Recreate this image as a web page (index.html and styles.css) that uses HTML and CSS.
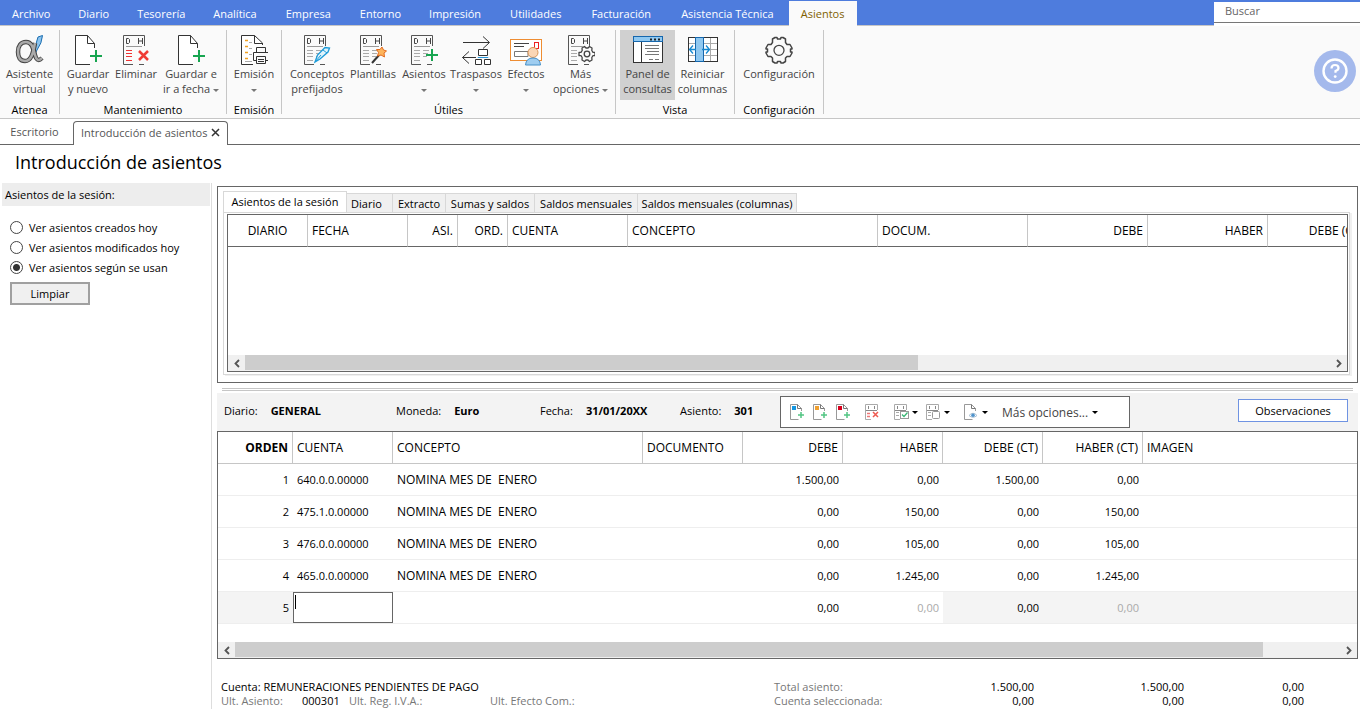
FILE: index.html
```html
<!DOCTYPE html>
<html lang="es">
<head>
<meta charset="utf-8">
<meta name="viewport" content="width=device-width, initial-scale=1">
<title>Introducción de asientos</title>
<link rel="stylesheet" href="styles.css">
</head>
<body>
<svg class="defs" aria-hidden="true">
  <symbol id="page-plus" viewBox="0 0 28 32">
    <path d="M20.500 14V9.500L13.500 1.500H1.500V30.500H16" fill="#fff" stroke="#333"/>
    <path d="M13.500 1.500V9.500H20.500" fill="none" stroke="#333"/>
    <path d="M22 16V28M16 22H28" stroke="#17a550" stroke-width="2"/>
  </symbol>
  <symbol id="ledger" viewBox="0 0 28 32">
    <path d="M22.500 12V1.500H1.500V30.500H11M17 30.500H22" fill="none" stroke="#555"/>
    <path d="M4.500 4.500V9.500H6.500L7.500 8.500V5.500L6.500 4.500ZM16.500 4V10M20.500 4V10M16.500 7H20.500" fill="none" stroke="#444"/>
    <path d="M4 12.500H20" stroke="#999"/>
  </symbol>
  <symbol id="ledger-lines" viewBox="0 0 28 32">
    <use href="#ledger"/>
    <path d="M4 16.500H10M4 19.500H10M4 22.500H10M4 26.500H10M13 16.500H19M13 19.500H18M13 22.500H17" stroke="#aaa"/>
  </symbol>
  <symbol id="gear" viewBox="0 0 28 28">
    <path d="M10 1.500H12L12.500 3H15.500L16 1.500H18L20.500 3V6.500L22 8.500H25L27 12V13H25.500V16H27V17L25 20.500H22L20.500 22V25.500L18 27H16L15.500 25.500H12.500L12 27H10L7.500 25.500V22L6 20.500H3L1 17V16H2.500V13H1V12L3 8.500H6L7.500 6.500V3Z" fill="none" stroke="#444" stroke-width="1.500" stroke-linejoin="round"/>
    <circle cx="14" cy="14.300" r="5" fill="none" stroke="#444" stroke-width="1.300"/>
  </symbol>
  <symbol id="small-page" viewBox="0 0 16 18">
    <path d="M12.500 8V5.500L8.500 1.500H1.500V16.500H9.500" fill="none" stroke="#999"/>
    <path d="M8.500 1.500V5.500H12.500" fill="none" stroke="#777"/>
  </symbol>
  <symbol id="small-plus" viewBox="0 0 16 18">
    <use href="#small-page"/>
    <path d="M12 9V15M9 12H15" stroke="#52c583" stroke-width="1.500"/>
  </symbol>
  <symbol id="small-ledger" viewBox="0 0 16 18">
    <path d="M13.500 7V1.500H1.500V16.500H7" fill="none" stroke="#aaa"/>
    <path d="M4.500 3V6M10.500 3V6M2 7.500H13" stroke="#888"/>
  </symbol>
  <symbol id="arrow-left" viewBox="0 0 8 9"><path d="M6 1L2.500 4.500L6 8" fill="none" stroke="#555" stroke-width="1.800"/></symbol>
  <symbol id="arrow-right" viewBox="0 0 8 9"><path d="M2 1L5.500 4.500L2 8" fill="none" stroke="#555" stroke-width="1.800"/></symbol>
</svg>

<header class="menubar">
  <nav class="menu" aria-label="Menú principal">
    <button class="menu-item">Archivo</button>
    <button class="menu-item">Diario</button>
    <button class="menu-item">Tesorería</button>
    <button class="menu-item">Analítica</button>
    <button class="menu-item menu-item-wide">Empresa</button>
    <button class="menu-item">Entorno</button>
    <button class="menu-item">Impresión</button>
    <button class="menu-item menu-item-wide">Utilidades</button>
    <button class="menu-item menu-item-wide">Facturación</button>
    <button class="menu-item menu-item-wide">Asistencia Técnica</button>
    <button class="menu-item menu-item-active">Asientos</button>
  </nav>
  <input class="search" type="search" placeholder="Buscar" aria-label="Buscar">
</header>

<section class="ribbon" aria-label="Cinta de opciones">
  <div class="group">
    <div class="tools tools-atenea">
      <button class="tool">
        <svg class="icon icon-wide" viewBox="0 0 30 32"><path d="M23 3L27.500 1.500Q27 9 22 16L20 20Q20 10 23 3Z" fill="#8cc4ee" stroke="#1c6eb0"/><path d="M20 9C18 20 16 27 10 27C5 27 3 23 3 18C3 12 6 8 11 8C17 8 18 14 20 21C21 25 23 28 27 24" fill="none" stroke="#444" stroke-width="4.500"/><path d="M20 9C18 20 16 27 10 27C5 27 3 23 3 18C3 12 6 8 11 8C17 8 18 14 20 21C21 25 23 28 27 24" fill="none" stroke="#aaa" stroke-width="2.500"/></svg>
        <span>Asistente<br>virtual</span>
      </button>
    </div>
    <h2 class="group-name">Atenea</h2>
  </div>
  <div class="group">
    <div class="tools tools-mantenimiento">
      <button class="tool"><svg class="icon" viewBox="0 0 28 32"><use href="#page-plus"/></svg><span>Guardar<br>y nuevo</span></button>
      <button class="tool"><svg class="icon" viewBox="0 0 28 32"><use href="#ledger"/><path d="M4 16.500H10M4 19.500H10M4 22.500H10M4 26.500H10" stroke="#e33"/><path d="M17 17L26 26M26 17L17 26" stroke="#ef3b35" stroke-width="2.500"/></svg><span>Eliminar</span></button>
      <button class="tool"><svg class="icon" viewBox="0 0 28 32"><use href="#page-plus"/></svg><span>Guardar e<br>ir a fecha <i class="caret"></i></span></button>
    </div>
    <h2 class="group-name">Mantenimiento</h2>
  </div>
  <div class="group">
    <div class="tools tools-emision">
      <button class="tool"><svg class="icon" viewBox="0 0 28 32"><path d="M22.500 11V9L14.500 1.500H1.500V30.500H13" fill="#fff" stroke="#333"/><path d="M14.500 1.500V9.500H22" fill="none" stroke="#333"/><path d="M5 6.500H8M5 12.500H8M5 18.500H8M5 24.500H8" stroke="#f0a020" stroke-width="1.500"/><path d="M9 8.500H12M9 14.500H12M9 20.500H12M5 27.500H12" stroke="#aaa"/><path d="M16.500 18V13.500H25.500V18M16.500 26.500H13.500V18.500H28.500V26.500H25.500M16.500 22.500H25.500V29.500H16.500ZM18 25.500H24M18 27.500H24" fill="none" stroke="#333"/></svg><span>Emisión<br><i class="caret"></i></span></button>
    </div>
    <h2 class="group-name">Emisión</h2>
  </div>
  <div class="group">
    <div class="tools tools-utiles">
      <button class="tool"><svg class="icon" viewBox="0 0 28 32"><use href="#ledger-lines"/><path d="M12 28L14.500 21L22 13.500L26.500 14L25 18L17 25Z" fill="#dff3fc" stroke="#1c9bd8" stroke-width="1.300"/><path d="M12 28L18 21M20 16L24 19" stroke="#1c9bd8"/></svg><span>Conceptos<br>prefijados</span></button>
      <button class="tool"><svg class="icon" viewBox="0 0 28 32"><use href="#ledger-lines"/><path d="M13 29L21 20" stroke="#333" stroke-width="2"/><path d="M23 13L24.500 16L27.500 17L25 19L25.500 23L22 21L18.500 22L19.500 18.500L17.500 15.500L21 15.500Z" fill="#fdb45c" stroke="#e46c20"/></svg><span>Plantillas</span></button>
      <button class="tool"><svg class="icon" viewBox="0 0 28 32"><use href="#ledger-lines"/><path d="M22 15V27M16 21H28" stroke="#17a550" stroke-width="2"/></svg><span>Asientos<br><i class="caret"></i></span></button>
      <button class="tool"><svg class="icon icon-wide" viewBox="0 0 32 32"><path d="M3 8.500H29M23 2.500L29.500 8.500L23 14.500M16 23.500H2.500M9 17.500L2.500 23.500L9 29.500" fill="none" stroke="#333"/><path d="M18.500 15.500H27.500V21.500H18.500ZM15.500 25.500H21.500V30.500H15.500ZM24.500 25.500H30.500V30.500H24.500Z" fill="#fff" stroke="#333"/><path d="M18 24V23.500H28V24" fill="none" stroke="#2795d8"/></svg><span>Traspasos<br><i class="caret"></i></span></button>
      <button class="tool"><svg class="icon icon-wide" viewBox="1 0 32 32"><rect x="1.500" y="5.500" width="31" height="21" fill="#fff" stroke="#ee8d32"/><path d="M5 9.500H20M5 12.500H15" stroke="#444"/><path d="M5.500 17.500H19V22.500H5.500Z" fill="none" stroke="#777"/><rect x="25.500" y="8.500" width="4" height="6" fill="none" stroke="#e22"/><circle cx="24" cy="18.500" r="5" fill="#fbd6b5" stroke="#d99455"/><path d="M16.500 31Q17 24 24 24Q31 24 31.500 31Z" fill="#9fcdf0" stroke="#4790c8"/></svg><span>Efectos<br><i class="caret"></i></span></button>
      <button class="tool"><svg class="icon" viewBox="0 0 28 32"><use href="#ledger-lines"/><circle cx="20" cy="20" r="8.500" fill="#fafafa"/><g fill="none" stroke="#444" stroke-width="1.300" stroke-linejoin="round"><path d="M17.500 12.500L19 14H21L22.500 12.500L25 14L24.800 16.500L26 18.300H28V21.700H26L24.800 23.500L25 26L22.500 27.500L21 26H19L17.500 27.500L15 26L15.200 23.500L14 21.700H12V18.300H14L15.200 16.500L15 14Z"/><circle cx="20" cy="20" r="2.800"/></g></svg><span>Más<br>opciones <i class="caret"></i></span></button>
    </div>
    <h2 class="group-name">Útiles</h2>
  </div>
  <div class="group">
    <div class="tools tools-vista">
      <button class="tool tool-on"><svg class="icon icon-wide" viewBox="0 0 32 32"><rect x="1.500" y="2.500" width="29" height="26" fill="#fff" stroke="#333"/><rect x="1.500" y="2.500" width="29" height="5" fill="#90c8f0" stroke="#1667ad"/><path d="M18 5.500H20M22 5.500H24M26 5.500H28" stroke="#222" stroke-width="2"/><path d="M9.500 8V28" stroke="#333"/><path d="M13 11.500H27M13 14.500H27M15 17.500H27M13 20.500H27M17 25.500H21M23 25.500H27" stroke="#777"/></svg><span>Panel de<br>consultas</span></button>
      <button class="tool"><svg class="icon icon-wide" viewBox="0 0 32 32"><rect x="1.500" y="3.500" width="29" height="24" fill="#fff" stroke="#333"/><path d="M2 9.500H30M2 15.500H30M2 21.500H30M23.500 4V27" stroke="#aaa"/><rect x="8.500" y="3.500" width="8" height="24" fill="#90c8f0" stroke="#1667ad"/><path d="M9 15.500H2.500M6 11.500L2.500 15.500L6 19.500M15 15.500H22.500M19 11.500L22.500 15.500L19 19.500" fill="none" stroke="#1688d0" stroke-width="1.300"/></svg><span>Reiniciar<br>columnas</span></button>
    </div>
    <h2 class="group-name">Vista</h2>
  </div>
  <div class="group">
    <div class="tools tools-config">
      <button class="tool"><svg class="icon" viewBox="0 0 28 32"><use href="#gear" x="0" y="2" width="28" height="28"/></svg><span>Configuración</span></button>
    </div>
    <h2 class="group-name">Configuración</h2>
  </div>
  <button class="help" aria-label="Ayuda"><svg viewBox="0 0 42 42"><circle cx="21" cy="21" r="21" fill="#a4b9ec"/><circle cx="21" cy="21" r="11.500" fill="none" stroke="#fff" stroke-width="2.400"/><path d="M17.500 18.500Q17.500 15 21 15Q24.500 15 24.500 18Q24.500 20 21.500 21V22.800" fill="none" stroke="#fff" stroke-width="2.200"/><circle cx="21.200" cy="26.600" r="1.400" fill="#fff"/></svg></button>
</section>

<nav class="doc-tabs" aria-label="Ventanas">
  <button class="doc-tab">Escritorio</button>
  <button class="doc-tab doc-tab-active">Introducción de asientos<svg class="close" viewBox="0 0 9 9"><path d="M1 1L8 8M8 1L1 8" stroke="#333" stroke-width="1.500"/></svg></button>
</nav>

<h1 class="title">Introducción de asientos</h1>

<div class="workspace">
  <aside class="sidebar">
    <fieldset class="options">
      <legend>Asientos de la sesión:</legend>
      <label><input type="radio" name="ver">Ver asientos creados hoy</label>
      <label><input type="radio" name="ver">Ver asientos modificados hoy</label>
      <label><input type="radio" name="ver" checked>Ver asientos según se usan</label>
    </fieldset>
    <button class="clear">Limpiar</button>
  </aside>

  <main class="main">
    <section class="session">
      <div class="session-tabs">
        <button class="session-tab session-tab-active">Asientos de la sesión</button>
        <button class="session-tab tab-diario">Diario</button>
        <button class="session-tab tab-extracto">Extracto</button>
        <button class="session-tab tab-sumas">Sumas y saldos</button>
        <button class="session-tab tab-saldos">Saldos mensuales</button>
        <button class="session-tab tab-columnas">Saldos mensuales (columnas)</button>
      </div>
      <div class="session-body">
        <div class="frame">
          <div class="session-view">
            <table class="grid session-grid">
              <colgroup><col class="w80"><col class="w100"><col class="w50"><col class="w50"><col class="w120"><col class="w250"><col class="w150"><col class="w120"><col class="w120"><col class="w100"></colgroup>
              <thead><tr><th class="mid">DIARIO</th><th>FECHA</th><th class="num">ASI.</th><th class="num">ORD.</th><th>CUENTA</th><th>CONCEPTO</th><th>DOCUM.</th><th class="num">DEBE</th><th class="num">HABER</th><th class="num">DEBE (CT)</th></tr></thead>
            </table>
          </div>
          <div class="scroll"><button aria-label="Izquierda"><svg viewBox="0 0 8 9"><use href="#arrow-left"/></svg></button><div class="track"><div class="thumb thumb-session"></div></div><button aria-label="Derecha"><svg viewBox="0 0 8 9"><use href="#arrow-right"/></svg></button></div>
        </div>
      </div>
    </section>
    <div class="splitter"></div>

    <section class="entry">
      <div class="entry-bar">
        <dl class="facts">
          <div class="fact fact-diario"><dt>Diario:</dt><dd>GENERAL</dd></div>
          <div class="fact fact-moneda"><dt>Moneda:</dt><dd>Euro</dd></div>
          <div class="fact fact-fecha"><dt>Fecha:</dt><dd>31/01/20XX</dd></div>
          <div class="fact fact-asiento"><dt>Asiento:</dt><dd>301</dd></div>
        </dl>
        <div class="actions">
          <button aria-label="Nuevo"><svg viewBox="0 0 16 18"><use href="#small-plus"/><path d="M3 3H7V7H3Z" fill="#1496e0"/></svg></button>
          <button aria-label="Insertar"><svg viewBox="0 0 16 18"><use href="#small-plus"/><path d="M3 3H7V7H3Z" fill="#f0a030"/></svg></button>
          <button aria-label="Añadir"><svg viewBox="0 0 16 18"><use href="#small-plus"/><path d="M3 3H7V7H3Z" fill="#d8001c"/></svg></button>
          <button class="spaced" aria-label="Eliminar"><svg viewBox="0 0 16 18"><use href="#small-ledger"/><path d="M3 10.500H6M3 13.500H6" stroke="#e77" stroke-width="1.500"/><path d="M9 9L14 14M14 9L9 14" stroke="#ee5a50" stroke-width="1.500"/></svg></button>
          <button class="spaced drop" aria-label="Punteo"><svg viewBox="0 0 16 18"><use href="#small-ledger"/><path d="M3 9.500H6M3 12.500H6" stroke="#aaa"/><rect x="7.500" y="8.500" width="8" height="7" fill="#fff" stroke="#999"/><path d="M9 11.500L11 13.500L14.500 9.500" fill="none" stroke="#36b673" stroke-width="1.300"/></svg><i class="caret dark"></i></button>
          <button class="drop" aria-label="Copiar"><svg viewBox="0 0 16 18"><use href="#small-ledger"/><path d="M3 9.500H6M3 12.500H6" stroke="#aaa"/><rect x="7.500" y="8.500" width="7" height="7" rx="1" fill="#fff" stroke="#999"/></svg><i class="caret dark"></i></button>
          <button class="spaced drop" aria-label="Ver documento"><svg viewBox="0 0 16 18"><use href="#small-page"/><path d="M6 12.500Q10 8 14 12.500Q10 16 6 12.500Z" fill="#fff" stroke="#a9bfd2"/><circle cx="10" cy="12.200" r="1.800" fill="#4f93cc"/></svg><i class="caret dark"></i></button>
          <button class="more">Más opciones... <i class="caret dark"></i></button>
        </div>
        <button class="notes">Observaciones</button>
      </div>

      <div class="frame">
        <div class="entry-view">
          <table class="grid entry-grid">
            <colgroup><col class="w75"><col class="w100"><col class="w250"><col class="w100"><col class="w100"><col class="w100"><col class="w100"><col class="w100"><col></colgroup>
            <thead><tr><th class="num strong">ORDEN</th><th>CUENTA</th><th>CONCEPTO</th><th>DOCUMENTO</th><th class="num">DEBE</th><th class="num">HABER</th><th class="num">DEBE (CT)</th><th class="num">HABER (CT)</th><th class="last">IMAGEN</th></tr></thead>
            <tbody>
              <tr><td class="num">1</td><td>640.0.0.00000</td><td class="concept">NOMINA MES DE&nbsp; ENERO</td><td></td><td class="num">1.500,00</td><td class="num">0,00</td><td class="num">1.500,00</td><td class="num">0,00</td><td></td></tr>
              <tr><td class="num">2</td><td>475.1.0.00000</td><td class="concept">NOMINA MES DE&nbsp; ENERO</td><td></td><td class="num">0,00</td><td class="num">150,00</td><td class="num">0,00</td><td class="num">150,00</td><td></td></tr>
              <tr><td class="num">3</td><td>476.0.0.00000</td><td class="concept">NOMINA MES DE&nbsp; ENERO</td><td></td><td class="num">0,00</td><td class="num">105,00</td><td class="num">0,00</td><td class="num">105,00</td><td></td></tr>
              <tr><td class="num">4</td><td>465.0.0.00000</td><td class="concept">NOMINA MES DE&nbsp; ENERO</td><td></td><td class="num">0,00</td><td class="num">1.245,00</td><td class="num">0,00</td><td class="num">1.245,00</td><td></td></tr>
              <tr class="editing"><td class="num shade">5</td><td class="field"><div class="field-box"><input type="text" aria-label="Cuenta"><span class="cursor"></span></div></td><td></td><td></td><td class="num">0,00</td><td class="num faint">0,00</td><td class="num shade">0,00</td><td class="num shade faint">0,00</td><td class="shade"></td></tr>
            </tbody>
          </table>
        </div>
        <div class="scroll"><button aria-label="Izquierda"><svg viewBox="0 0 8 9"><use href="#arrow-left"/></svg></button><div class="track"><div class="thumb thumb-entry"></div></div><button aria-label="Derecha"><svg viewBox="0 0 8 9"><use href="#arrow-right"/></svg></button></div>
      </div>
    </section>

    <footer class="status">
      <div class="account">
        <p>Cuenta: REMUNERACIONES PENDIENTES DE PAGO</p>
        <p class="last-items"><span class="muted">Ult. Asiento:</span><span>000301</span><span class="muted">Ult. Reg. I.V.A.:</span><span class="muted">Ult. Efecto Com.:</span></p>
      </div>
      <div class="totals">
        <span class="muted">Total asiento:</span><output>1.500,00</output><output>1.500,00</output><output>0,00</output>
        <span class="muted">Cuenta seleccionada:</span><output>0,00</output><output>0,00</output><output>0,00</output>
      </div>
    </footer>
  </main>
</div>
</body>
</html>
```
FILE: styles.css
```css
* { box-sizing: border-box; }

body {
  margin: 0;
  min-height: 100vh;
  display: flex;
  flex-direction: column;
  overflow: hidden;
  background: #fff;
  color: #000;
  font: 11px/15px "Open Sans", "Noto Sans", sans-serif;
}

button, input { font: inherit; color: inherit; }
button { padding: 0; border: 0; background: none; white-space: nowrap; }
h1, h2, p, dl, dd { margin: 0; font-weight: 400; }
.defs { display: none; }

/* Menu bar */
.menubar { display: flex; justify-content: space-between; height: 26px; background: #4e7cdd; border-bottom: 1px solid #c6c6c6; }
.menu { display: flex; }
.menu-item { padding: 2px 14px 0; color: #fff; }
.menu-item:first-child { padding-left: 12px; }
.menu-item-wide { padding: 2px 15px 0; }
.menu-item-active { width: 68px; height: 25px; margin-top: 1px; padding: 0; background: #fafafa; color: #806000; }
.search { width: 146px; height: 21px; margin-top: 2px; padding: 0 11px 3px; border: 0; border-bottom: 1px solid #777; box-shadow: 0 3px #fff; background: #fff; outline: 0; }
.search::placeholder { color: #666; }

/* Ribbon */
.ribbon { display: flex; height: 93px; padding-top: 4px; background: #fafafa; border-bottom: 1px solid #c6c6c6; }
.group { display: flex; flex-direction: column; height: 84px; border-right: 1px solid #c6c6c6; }
.tools { display: grid; flex: none; height: 70px; }
.tools-atenea { grid-template-columns: 59px; }
.tools-mantenimiento { grid-template-columns: 56px 40px 70px; }
.tools-emision { grid-template-columns: 54px; }
.tools-utiles { grid-template-columns: 70px 42px 60px 44px 56px 53px; padding-right: 8px; }
.tools-vista { grid-template-columns: 55px 55px; padding: 0 4px; }
.tools-config { grid-template-columns: 88px; }
.tool { display: flex; flex-direction: column; align-items: center; min-width: 0; padding-top: 4px; color: #444; }
.tool-on { background: #d0d0d0; }
.icon { flex: none; width: 28px; height: 32px; }
.icon-wide { width: 32px; }
.group-name { margin-top: 5px; font-size: 11px; line-height: 10px; text-align: center; }
.caret { display: inline-block; border: 3px solid transparent; border-top-color: #777; border-bottom: 0; vertical-align: middle; }
.caret.dark { border-top-color: #000; }
.help { width: 42px; height: 42px; margin: 20px 4px 0 auto; border-radius: 50%; }
.help svg { display: block; }

/* Window tabs */
.doc-tabs { display: flex; align-items: flex-end; height: 26px; border-bottom: 1px solid #666; color: #555; }
.doc-tab { width: 73px; height: 25px; padding: 0 4px 0 0; }
.doc-tab-active { display: flex; align-items: center; gap: 4px; width: 155px; height: 24px; margin-bottom: -1px; padding: 0 7px 2px; border: 1px solid #666; border-bottom: 0; border-radius: 4px 4px 0 0; background: #fff; }
.close { flex: none; width: 9px; height: 9px; }

.title { padding: 5px 15px 8px; font-size: 18px; line-height: 25px; }

/* Workspace */
.workspace { display: flex; flex: 1; }
.sidebar { flex: none; width: 212px; padding: 0 1px 0 2px; border-right: 1px solid #ddd; }
.options { display: flex; flex-direction: column; margin: 0; padding: 0; border: 0; }
.options legend { width: 100%; margin-bottom: 11px; padding: 4px 3px; background: #ededed; }
.options label { display: flex; align-items: center; gap: 6px; height: 20px; padding-left: 8px; }
.options input { appearance: none; width: 13px; height: 13px; margin: 0; border: 1px solid #444; border-radius: 50%; background: #fff; }
.options input:checked { background: radial-gradient(circle, #333 0 3px, #fff 4px); }
.clear { width: 80px; height: 23px; margin: 5px 8px; border: 2px solid #a0a0a0; background: #f0f0f0; }

.main { flex: 1; min-width: 0; padding: 3px 2px 0 5px; }

/* Session panel */
.session { padding: 4px 7px 7px 5px; border: 1px solid #666; }
.session-tabs { display: flex; align-items: flex-end; }
.session-tab { height: 19px; border: 1px solid #d8d8d8; border-left: 0; border-bottom: 0; background: #f0f0f0; }
.session-tab-active { width: 124px; height: 21px; padding-bottom: 2px; border-left: 1px solid #d8d8d8; background: #fff; }
.tab-diario { width: 46px; padding-right: 6px; }
.tab-extracto { width: 53px; }
.tab-sumas { width: 89px; }
.tab-saldos { width: 103px; }
.tab-columnas { width: 159px; }
.session-body { padding: 1px 1px 2px 3px; border: 1px solid #d8d8d8; box-shadow: 2px 1px #f0f0f0; }
.frame { border: 1px solid #666; }
.session-view { height: 140px; overflow: hidden; }

/* Grids */
.grid { border-collapse: separate; border-spacing: 0; table-layout: fixed; width: 100%; }
.session-grid { width: 1140px; }
.grid th { height: 32px; padding: 0 4px; border-right: 1px solid #c6c6c6; border-bottom: 1px solid #c6c6c6; font-weight: 400; text-align: left; font-size: 12px; white-space: nowrap; }
.session-grid th { border-bottom-color: #666; }
.grid td { height: 32px; padding: 0 4px; border-bottom: 1px solid #eee; white-space: nowrap; }
.grid .num { text-align: right; }
.grid td.concept { font-size: 12px; }
.grid th.mid { text-align: center; }
.grid th.strong { font-weight: 700; }
.grid th.last { border-right: 0; }
.w50 { width: 50px; }
.w75 { width: 75px; }
.w80 { width: 80px; }
.w100 { width: 100px; }
.w120 { width: 120px; }
.w150 { width: 150px; }
.w250 { width: 250px; }

/* Scroll bars */
.scroll { display: flex; height: 16px; background: #f0f0f0; }
.scroll button { display: flex; align-items: center; justify-content: center; width: 17px; }
.scroll svg { width: 8px; height: 9px; }
.track { flex: 1; }
.thumb { height: 15px; background: #cdcdcd; }
.thumb-session { width: 62%; }
.thumb-entry { width: 93%; }

.splitter { height: 3px; margin: 5px 5px 2px; border: 1px solid #c6c6c6; border-left: 0; border-right: 0; }

/* Entry header */
.entry-bar { display: flex; align-items: center; height: 38px; padding: 0 10px 0 7px; background: #f3f3f3; }
.facts { display: flex; padding-bottom: 3px; }
.fact { display: flex; gap: 13px; }
.fact dd { font-weight: 700; }
.fact-diario { width: 172px; }
.fact-moneda { width: 144px; }
.fact-fecha { width: 140px; }
.fact-asiento { width: 100px; }
.actions { display: flex; align-items: center; width: 350px; height: 32px; padding-left: 8px; border: 1px solid #666; background: #fff; }
.actions button { display: flex; align-items: center; width: 23px; }
.actions button svg { flex: none; width: 16px; height: 18px; }
.actions .drop { gap: 3px; width: 32px; }
.actions .spaced { margin-left: 6px; }
.actions .more { gap: 4px; width: auto; margin-left: 7px; color: #444; font-size: 12px; }
.notes { width: 110px; height: 23px; margin: 0 0 3px auto; border: 1px solid #6f93e2; background: #fff; }

/* Entry grid */
.entry-view { min-height: 210px; }
.editing .shade { background: #f4f4f4; }
.grid .faint { color: #aaa; }
.grid td.field { padding: 0; }
.field-box { position: relative; height: 31px; }
.field-box input { display: block; width: 100%; height: 31px; padding: 0 4px; border: 1px solid #666; border-radius: 0; outline: 0; }
.cursor { position: absolute; top: 3px; left: 2px; width: 1px; height: 14px; background: #000; }

/* Status */
.status { display: flex; justify-content: space-between; padding: 21px 54px 0 4px; line-height: 14px; }
.muted { color: #777; }
.last-items { display: grid; grid-template-columns: 81px 47px 141px auto; white-space: nowrap; }
.totals { display: grid; grid-template-columns: 110px 150px 150px 120px; }
.totals output { text-align: right; }
```
